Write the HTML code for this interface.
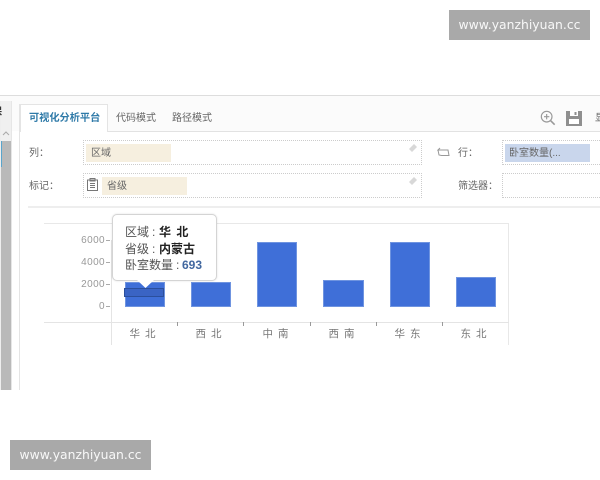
<!DOCTYPE html>
<html><head><meta charset="utf-8">
<style>
html,body{margin:0;padding:0;background:#fff}
body{width:600px;height:480px;overflow:hidden;position:relative;font-family:"Liberation Sans","Noto Sans CJK SC",sans-serif;color:#555}
#w{position:absolute;left:0;top:0;width:600px;height:480px;filter:blur(.3px)}
.a{position:absolute}
.t{position:absolute;white-space:nowrap;font-size:10px;line-height:16px}
.wm{position:absolute;width:141px;height:30px;background:#a9a9a9;color:#f8f8f8;font:12.4px/30px "DejaVu Sans",sans-serif;text-align:center;white-space:nowrap}
.f{position:absolute;border:1px dotted #ccc;box-sizing:border-box;background:#fff}
.b{position:absolute;background:#3f6fd8;border:1px solid #6f94e0;box-sizing:border-box}
.y{position:absolute;width:40px;left:65px;text-align:right;font-size:10px;line-height:12px;color:#999;letter-spacing:.4px}
.yt{position:absolute;left:106px;width:4px;height:1px;background:#aaa}
.x{position:absolute;top:327px;width:50px;text-align:center;font-size:10.5px;line-height:14px;color:#777;letter-spacing:1px;white-space:nowrap}
.xt{position:absolute;top:322px;width:1px;height:4px;background:#999}
.tip{position:absolute;white-space:nowrap;font-size:12px;line-height:16px;color:#555}
.tip b{position:absolute;top:0;color:#222}
.tip i{position:absolute;top:0;font-style:normal}
</style></head>
<body><div id="w">
<div class="wm" style="left:449px;top:10px">www.yanzhiyuan.cc</div>
<div class="wm" style="left:10px;top:440px">www.yanzhiyuan.cc</div>

<!-- app frame -->
<div class="a" style="left:0;top:95px;width:600px;height:295px;background:#fff;overflow:hidden">
  <div class="a" style="left:0;top:0;width:600px;height:1px;background:#ddd"></div>
  <div class="a" style="left:0;top:1px;width:600px;height:35px;background:#fbfbfb"></div>
  <div class="a" style="left:0;top:6px;width:11px;height:289px;background:#b9b9b9"></div>
  <div class="a" style="left:0;top:6px;width:11px;height:40px;background:#f0f0f0"></div>
  <div class="a" style="left:0;top:46px;width:2px;height:26px;background:#5aa5cc"></div>
  <div class="a" style="left:0;top:6px;width:1px;height:289px;background:#eee"></div>
  <div class="a" style="left:11px;top:6px;width:1px;height:289px;background:#e6e6e6"></div>
  <svg class="a" style="left:2px;top:36px" width="8" height="6"><path d="M1 4L4 1L7 4" fill="none" stroke="#aaa"/></svg>
  <div class="t" style="left:-8px;top:10px;color:#333;font-weight:bold">保</div>
  <div class="a" style="left:19px;top:9px;width:1px;height:286px;background:#e4e4e4"></div>
  <div class="a" style="left:20px;top:36px;width:580px;height:1px;background:#e2e2e2"></div>
  <div class="a" style="left:20px;top:9px;width:88px;height:28px;background:#fff;border:1px solid #e4e4e4;border-bottom:none;box-sizing:border-box"></div>
</div>

<div class="t" style="left:29px;top:111px;color:#2f7aa8;font-weight:bold;font-size:10.2px">可视化分析平台</div>
<div class="t" style="left:116px;top:111px;color:#666">代码模式</div>
<div class="t" style="left:172px;top:111px;color:#666">路径模式</div>

<!-- toolbar icons -->
<svg class="a" style="left:540px;top:110px" width="16" height="16" viewBox="0 0 18 18" fill="none" stroke="#999" stroke-width="1.3">
  <circle cx="7.500" cy="7.500" r="6"/><path d="M7.500 4.500V10.500M4.500 7.500H10.500"/><path d="M12 12L16.500 16.500" stroke-width="1.800"/>
</svg>
<svg class="a" style="left:566px;top:111px" width="16" height="15" viewBox="0 0 16 15">
  <path d="M0 0H16V15H0Z" fill="#8f8f8f"/><rect x="4" y="0" width="8" height="5" fill="#fff"/><rect x="8.500" y="1" width="2" height="3" fill="#8f8f8f"/><rect x="3" y="8" width="10" height="5" fill="#fff"/>
</svg>
<div class="t" style="left:595px;top:111px;color:#666">显</div>

<!-- row 1 -->
<div class="t" style="left:29px;top:146px;color:#666">列：</div>
<div class="f" style="left:83px;top:140px;width:339px;height:25px"></div>
<div class="a" style="left:86px;top:144px;width:85px;height:18px;background:#f6efdf"></div>
<div class="t" style="left:91px;top:146px;color:#666">区域</div>
<svg class="a" style="left:408px;top:143px" width="10" height="10"><path d="M1 6L6 1L9 4L4 9Z" fill="#d8d8d8"/></svg>
<svg class="a" style="left:437px;top:147px" width="13" height="11" fill="none" stroke="#999"><path d="M3 1L1 3H11L12 8.500H4.500L2 8L1 3"/></svg>
<div class="t" style="left:458px;top:146px;color:#666">行：</div>
<div class="f" style="left:502px;top:140px;width:100px;height:25px"></div>
<div class="a" style="left:505px;top:144px;width:85px;height:18px;background:#c9d6ec"></div>
<div class="t" style="left:509px;top:146px;color:#666">卧室数量(...</div>

<!-- row 2 -->
<div class="t" style="left:29px;top:179px;color:#666">标记：</div>
<div class="f" style="left:83px;top:173px;width:339px;height:25px"></div>
<svg class="a" style="left:87px;top:178px" width="11" height="13" fill="none" stroke="#777"><path d="M.5 2H10.500V12.500H.5Z"/><path d="M3 .5H8V3H3ZM3 5.500H8M3 7.500H8M3 9.500H8"/></svg>
<div class="a" style="left:102px;top:177px;width:85px;height:18px;background:#f6efdf"></div>
<div class="t" style="left:107px;top:179px;color:#666">省级</div>
<svg class="a" style="left:408px;top:176px" width="10" height="10"><path d="M1 6L6 1L9 4L4 9Z" fill="#d8d8d8"/></svg>
<div class="t" style="left:458px;top:179px;color:#666">筛选器：</div>
<div class="f" style="left:502px;top:173px;width:100px;height:25px"></div>
<div class="a" style="left:28px;top:206px;width:572px;height:2px;background:#eee"></div>

<!-- chart -->
<div class="a" style="left:44px;top:223px;width:465px;height:1px;background:#e8e8e8"></div>
<div class="a" style="left:508px;top:223px;width:1px;height:122px;background:#e8e8e8"></div>
<div class="a" style="left:44px;top:322px;width:465px;height:1px;background:#e4e4e4"></div>
<div class="a" style="left:111px;top:240px;width:1px;height:105px;background:#e4e4e4"></div>

<div class="y" style="top:235px">6000</div><div class="yt" style="top:240px"></div>
<div class="y" style="top:257px">4000</div><div class="yt" style="top:262px"></div>
<div class="y" style="top:279px">2000</div><div class="yt" style="top:284px"></div>
<div class="y" style="top:301px">0</div><div class="yt" style="top:306px"></div>

<div class="b" style="left:125px;top:282px;width:40px;height:25px"></div>
<div class="a" style="left:124px;top:288px;width:40px;height:9px;box-sizing:border-box;border:1px solid #2b4f9c;background:#3a64c4"></div>
<div class="b" style="left:191px;top:282px;width:40px;height:25px"></div>
<div class="b" style="left:257px;top:242px;width:40px;height:65px"></div>
<div class="b" style="left:323px;top:280px;width:41px;height:27px"></div>
<div class="b" style="left:390px;top:242px;width:40px;height:65px"></div>
<div class="b" style="left:456px;top:277px;width:40px;height:30px"></div>

<div class="xt" style="left:177px"></div><div class="xt" style="left:243px"></div><div class="xt" style="left:310px"></div><div class="xt" style="left:376px"></div><div class="xt" style="left:442px"></div>
<div class="x" style="left:118px">华 北</div>
<div class="x" style="left:184px">西 北</div>
<div class="x" style="left:251px">中 南</div>
<div class="x" style="left:317px">西 南</div>
<div class="x" style="left:383px">华 东</div>
<div class="x" style="left:449px">东 北</div>

<!-- tooltip -->
<div class="a" style="left:112px;top:214px;width:105px;height:67px;box-sizing:border-box;background:#fff;border:1px solid #d4d4d4;border-radius:5px;box-shadow:0 0 2px rgba(0,0,0,.12)"></div>
<svg class="a" style="left:137px;top:280px" width="17" height="9"><path d="M0 0L8.500 8L17 0Z" fill="#fff"/></svg>
<div class="tip" style="left:125px;top:224px">区域<i style="left:27px">:</i><b style="left:159px;margin-left:-125px;letter-spacing:1px">华 北</b></div>
<div class="tip" style="left:125px;top:241px">省级<i style="left:27px">:</i><b style="left:34px">内蒙古</b></div>
<div class="tip" style="left:125px;top:257px">卧室数量<i style="left:51px">:</i><b style="left:57px;color:#41679f">693</b></div>
</div></body></html>
